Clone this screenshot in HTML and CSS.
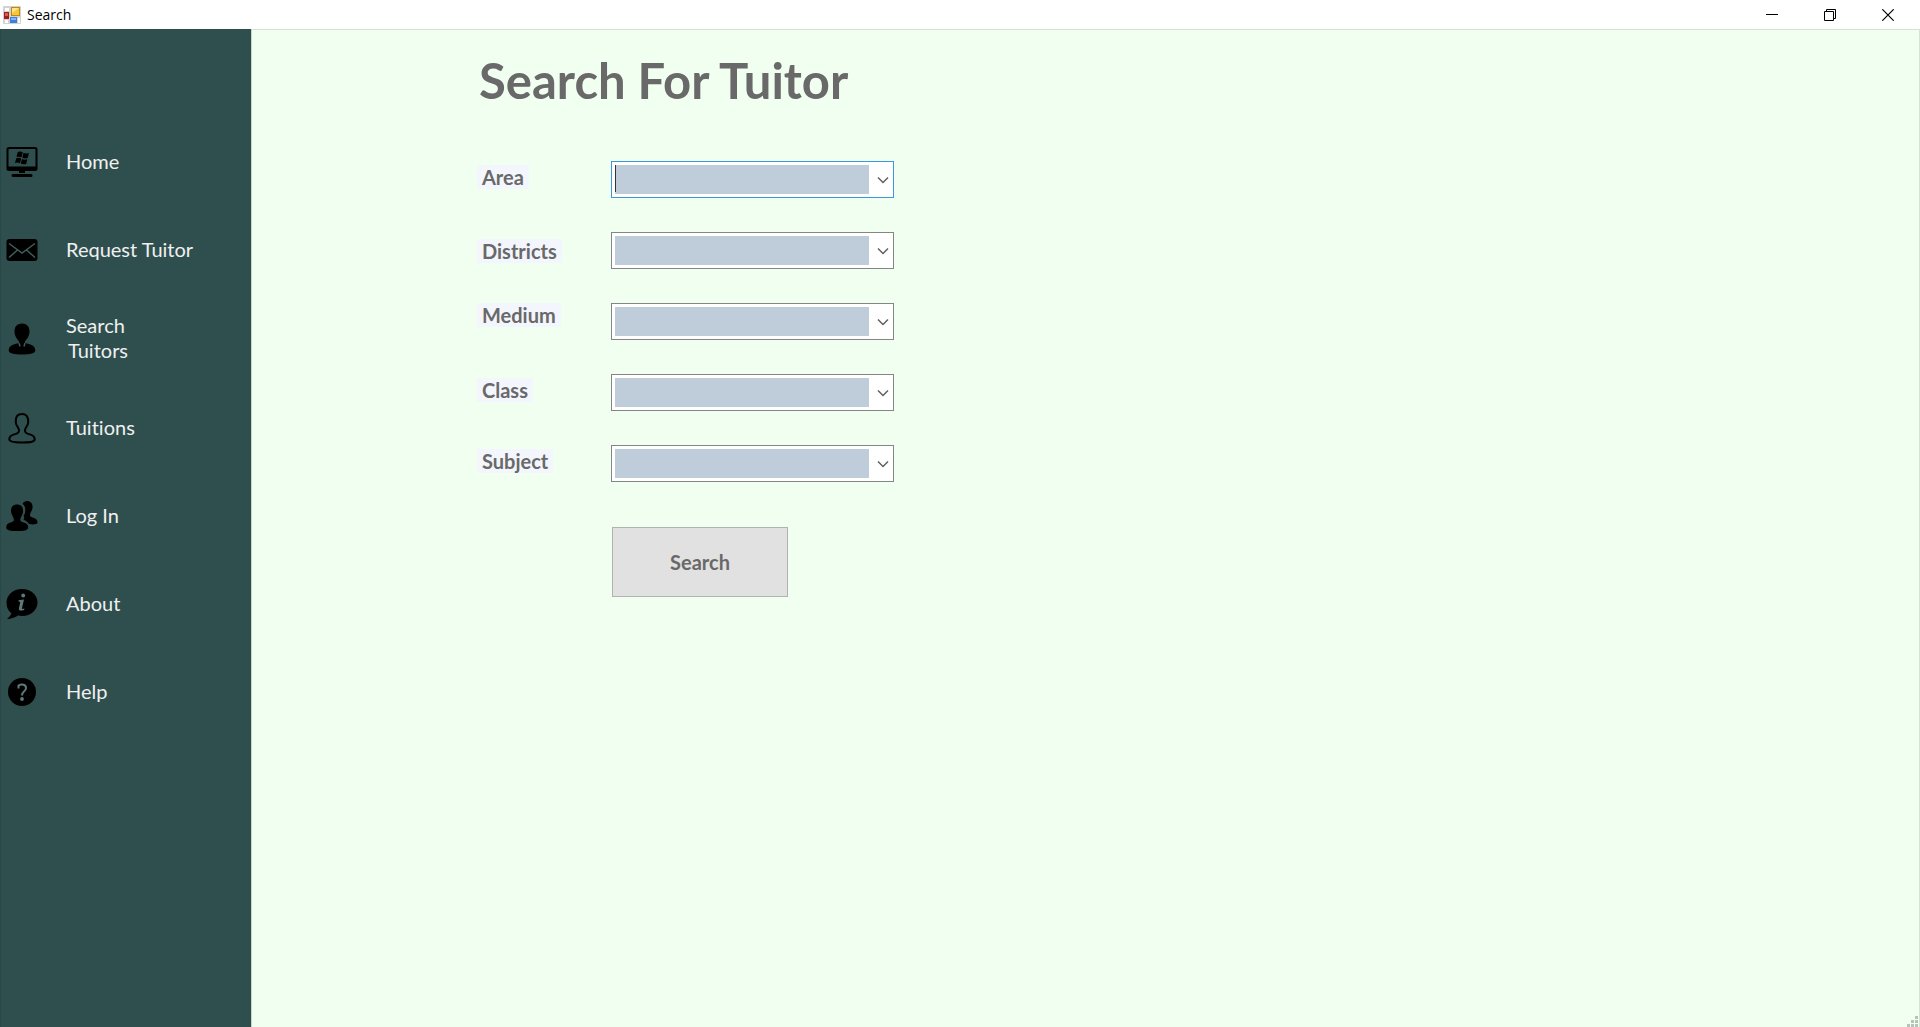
FILE: index.html
```html
<!DOCTYPE html>
<html lang="en">
<head>
<meta charset="utf-8">
<title>Search</title>
<link rel="stylesheet" href="styles.css">
</head>
<body>
<header class="titlebar">
  <svg class="app-icon" width="18" height="18" viewBox="0 0 18 18" aria-hidden="true">
    <rect width="18" height="18" rx="1" fill="#d2d2d2"/>
    <path d="M2 2h4v3H2zM2 14h3v3H2zM15 12h2v5h-2z" fill="#fff"/>
    <rect x="8" y="1" width="9" height="9" fill="#c08a10"/><rect x="9" y="2" width="7" height="7" fill="#f6c63c"/><path d="M9 2h7L9 7z" fill="#ffe48a"/>
    <rect x="1" y="6" width="5" height="7" fill="#a81c1c"/><rect x="2" y="7" width="3" height="3" fill="#dd5a50"/>
    <rect x="7" y="11" width="7" height="6" fill="#3f7fdc"/><rect x="8" y="12" width="5" height="2" fill="#86b4f2"/>
  </svg>
  <span class="window-title">Search</span>
  <button class="window-button" type="button" aria-label="Minimize"><svg width="12" height="12" viewBox="0 0 12 12"><path d="M0 5.500h12" stroke="#000"/></svg></button>
  <button class="window-button" type="button" aria-label="Restore"><svg width="12" height="12" viewBox="0 0 12 12"><path d="M.5 2.500h9v9h-9zM2.500 2.500v-2h9v9h-2" fill="none" stroke="#000"/></svg></button>
  <button class="window-button" type="button" aria-label="Close"><svg width="12" height="12" viewBox="0 0 12 12"><path d="M.3.3l11.400 11.400M11.700.3L.3 11.700" stroke="#000" stroke-width="1.200"/></svg></button>
</header>
<div class="window">
  <nav class="sidebar">
    <a class="nav-item" href="#home">
      <svg class="nav-icon" viewBox="0 0 32 32"><path fill-rule="evenodd" d="M3 1h26q2.500 0 2.500 2.500v19Q31.500 25 29 25H3Q.5 25 .5 22.500v-19Q.5 1 3 1zM3.500 3q-1 0-1 1v16.500h27V4q0-1-1-1z"/><path d="M13 25h6v2h-6zM7 28h18q1.500 0 1.500 1.500T25 31H7q-1.500 0-1.500-1.500T7 28z"/><path d="M11.700 6q3-1 5 .3l-1.200 5q-2.200-1.200-5-.2zM17.500 6.800q2.500 1.200 5.400.3l-1.200 5q-2.900.9-5.400-.4zM10.200 12.200q2.700-1 5 .2l-1.200 4.800q-2.200-1.200-5-.2zM16 12.900q2.500 1.300 5.400.3l-1.200 4.800q-2.900.9-5.400-.4z"/></svg>
      <span>Home</span>
    </a>
    <a class="nav-item" href="#request">
      <svg class="nav-icon" viewBox="0 0 32 32"><rect x=".5" y="5" width="31" height="22" rx="3"/><path class="cutout" d="M3 9.500l13 9.500 13-9.500M3 23.500l8.500-7.500M29 23.500L20.500 16"/></svg>
      <span>Request Tuitor</span>
    </a>
    <a class="nav-item" href="#search">
      <svg class="nav-icon" viewBox="0 0 32 32"><path d="M16 .5c5 0 7.800 3.500 7.500 8.500-.2 4.500-3 7.500-4.500 9.500v1.500l3 .8c4.500 1 7 2.700 7.300 6.200.2 3.500-5 4.500-13.300 4.500S2.500 30.500 2.700 27c.3-3.500 2.800-5.200 7.300-6.200l3-.8v-1.500c-1.500-2-4.300-5-4.500-9.500C8.200 4 11 .5 16 .5z"/><path class="cutout" d="M13 20l1 3.500M19 20l-1 3.500"/></svg>
      <span>Search<br><span class="second-line">Tuitors</span></span>
    </a>
    <a class="nav-item" href="#tuitions">
      <svg class="nav-icon" viewBox="0 0 32 32"><path class="outline" d="M16 2c4.500-.3 6.500 3 6.200 8.500-.2 3-2.700 5-3.200 7.500-.4 2.500 1 3.400 4 4.100 3.500.8 5.700 2.600 5.700 5.200 0 2.800-5 3.200-12.700 3.200S3.300 30 3.300 27.300c0-2.600 2.200-4.400 5.700-5.200 3-.7 4.400-1.600 4-4.100-.5-2.500-3-4.500-3.200-7.500C9.500 6 10.500 2 16 2z"/></svg>
      <span>Tuitions</span>
    </a>
    <a class="nav-item" href="#login">
      <svg class="nav-icon" viewBox="0 0 32 32"><path d="M21 1c4 0 6 3 5.500 7-.3 3-2.500 4.500-2.500 7 0 1.500 1 2 3.300 2.800 3 1 4.500 2.700 4.200 4.700-.3 2.300-5 2.300-8.500 1.500-1.200-2.200-3-3.300-5.500-4.300 1-2 .8-2.900 0-3.700 1.500-1.700 2.300-5.500 1.500-8.500-.4-1.700-1.500-2.800-2.500-3.500C17.300 2.300 19 1 21 1z"/><path d="M11 4.500c4.500 0 6.500 3 6 7.500-.3 3-2.500 5-2.700 7.500 0 1.800 1.200 2.300 3.500 3 3 .9 4.400 2.400 4.400 5 0 3-5 3.500-11 3.500S.2 30.500.2 27.500c0-2.600 1.300-4.100 4.200-5 2.300-.7 3.500-1.200 3.500-3-.2-2.500-2.500-4.500-2.800-7.500-.5-4.500 1.500-7.500 5.900-7.500z"/></svg>
      <span>Log In</span>
    </a>
    <a class="nav-item" href="#about">
      <svg class="nav-icon" viewBox="0 0 32 32"><path d="M16 1c9 0 15.500 6 15.500 13.500S25 28 16 28q-2 0-4-.4Q7 31 1 31q3.500-2.500 4.500-5.500Q.5 21.500.5 14.500C.5 7 7 1 16 1z"/><circle class="light" cx="17.200" cy="7.500" r="1.900"/><path class="light" d="M12.500 12.200l5.500-.7-2 8.500q-.3 1.500 2.500.5l-.5 1.500q-5.700 1.800-5-2l1.200-5.500q.2-1-1.700-1z"/></svg>
      <span>About</span>
    </a>
    <a class="nav-item" href="#help">
      <svg class="nav-icon" viewBox="0 0 32 32"><circle cx="16" cy="16" r="14"/><path class="mark" d="M12.500 12.500V9.500q2-1.200 4-1 3.500.3 3.500 3.500 0 2-2 3.500-2 1.500-2 4"/><circle class="light" cx="16" cy="23" r="1.900"/></svg>
      <span>Help</span>
    </a>
  </nav>
  <main class="content">
    <h1 class="heading">Search For Tuitor</h1>
    <form class="search-form">
      <label class="field-label" for="area">Area</label>
      <div class="combo"><select class="combo-box combo-active" id="area"><option></option></select><svg class="chevron" viewBox="0 0 12 8"><path d="M1 1.500l5 5 5-5"/></svg></div>
      <label class="field-label label-low" for="districts">Districts</label>
      <div class="combo"><select class="combo-box" id="districts"><option></option></select><svg class="chevron" viewBox="0 0 12 8"><path d="M1 1.500l5 5 5-5"/></svg></div>
      <label class="field-label label-high" for="medium">Medium</label>
      <div class="combo"><select class="combo-box" id="medium"><option></option></select><svg class="chevron" viewBox="0 0 12 8"><path d="M1 1.500l5 5 5-5"/></svg></div>
      <label class="field-label" for="class">Class</label>
      <div class="combo"><select class="combo-box" id="class"><option></option></select><svg class="chevron" viewBox="0 0 12 8"><path d="M1 1.500l5 5 5-5"/></svg></div>
      <label class="field-label" for="subject">Subject</label>
      <div class="combo"><select class="combo-box" id="subject"><option></option></select><svg class="chevron" viewBox="0 0 12 8"><path d="M1 1.500l5 5 5-5"/></svg></div>
      <button class="search-button" type="button">Search</button>
    </form>
  </main>
</div>
<svg class="grip" width="11" height="11" viewBox="0 0 11 11" aria-hidden="true"><path d="M8 0h3v3H8zM4 4h3v3H4zM8 4h3v3H8zM0 8h3v3H0zM4 8h3v3H4zM8 8h3v3H8z"/></svg>
</body>
</html>
```
FILE: styles.css
```css
* { box-sizing: border-box; }

body {
  margin: 0;
  min-height: 100vh;
  display: flex;
  flex-direction: column;
  font-family: "Century Gothic", Lato, sans-serif;
  font-variant-ligatures: none;
  background: #f0fff0;
}

.titlebar {
  display: flex;
  align-items: center;
  height: 29px;
  padding: 0 3px;
  background: #fff;
}

.window-title {
  flex: 1;
  margin-left: 6px;
  font: 14px/20px "Segoe UI", "Open Sans", sans-serif;
  color: #000;
}

.window-button {
  display: grid;
  place-items: center;
  width: 58px;
  height: 28px;
  padding: 0;
  border: 0;
  background: none;
}

.window {
  flex: 1;
  display: flex;
  border-top: 1px solid #d5e3d5;
  border-right: 1px solid #d5e3d5;
}

.sidebar {
  flex: 0 0 252px;
  margin-top: -1px;
  padding-top: 89px;
  border-left: 1px solid #2a4747;
  border-right: 1px solid #c5d6cd;
  background: #2f4f4f;
}

.nav-item {
  display: flex;
  align-items: center;
  gap: 28px;
  min-height: 88px;
  padding: 19px 5px;
  font-size: 20px;
  line-height: 25px;
  color: #f0f0f0;
  text-decoration: none;
}

.nav-item > span { padding-bottom: 2px; }

.nav-icon { width: 32px; height: 32px; fill: #000; }
.second-line { padding-left: 2px; }
.cutout { fill: none; stroke: #3d5d5d; stroke-width: 1.5; }
.outline { fill: none; stroke: #000; stroke-width: 2; }
.light { fill: #5d7a7a; }
.mark { fill: none; stroke: #5d7a7a; stroke-width: 2; }

.content {
  flex: 1;
  padding: 20px 20px 20px 225px;
  color: #696969;
}

.heading {
  margin: 0 0 51px 2px;
  font-size: 49px;
  line-height: 60px;
}

.search-form {
  display: grid;
  grid-template-columns: 134px minmax(0, 283px);
  row-gap: 34px;
}

.field-label {
  place-self: center start;
  margin-bottom: 6px;
  padding: 0 5px;
  font-size: 20px;
  font-weight: 700;
  line-height: 24px;
  background: #f3f6fd;
}
.label-low { align-self: end; }
.label-high { align-self: start; }

.combo { display: grid; }

.combo-box {
  grid-area: 1 / 1;
  appearance: none;
  width: 100%;
  height: 37px;
  border: 1px solid #858585;
  border-radius: 0;
  outline: 0;
  background: linear-gradient(#bfccda, #bfccda) 3px 3px / calc(100% - 27px) calc(100% - 6px) no-repeat #fff;
}

.combo-active {
  border-color: #3b98e0;
  background:
    linear-gradient(#333, #333) 3px 3px / 1px 27px no-repeat,
    linear-gradient(#bfccda, #bfccda) 3px 3px / calc(100% - 27px) calc(100% - 6px) no-repeat #fff;
}

.chevron {
  grid-area: 1 / 1;
  place-self: center end;
  width: 12px;
  height: 8px;
  margin-right: 5px;
  fill: none;
  stroke: #606060;
  stroke-width: 1.5;
  pointer-events: none;
}

.search-button {
  grid-column: 2;
  width: 176px;
  height: 70px;
  margin: 11px 0 0 1px;
  border: 1px solid #b0b3b0;
  background: #e1e1e1;
  font: 700 20px/24px "Century Gothic", Lato, sans-serif;
  color: #696969;
}

.grip { position: fixed; right: 2px; bottom: 0; fill: #b9c2b9; }
```
